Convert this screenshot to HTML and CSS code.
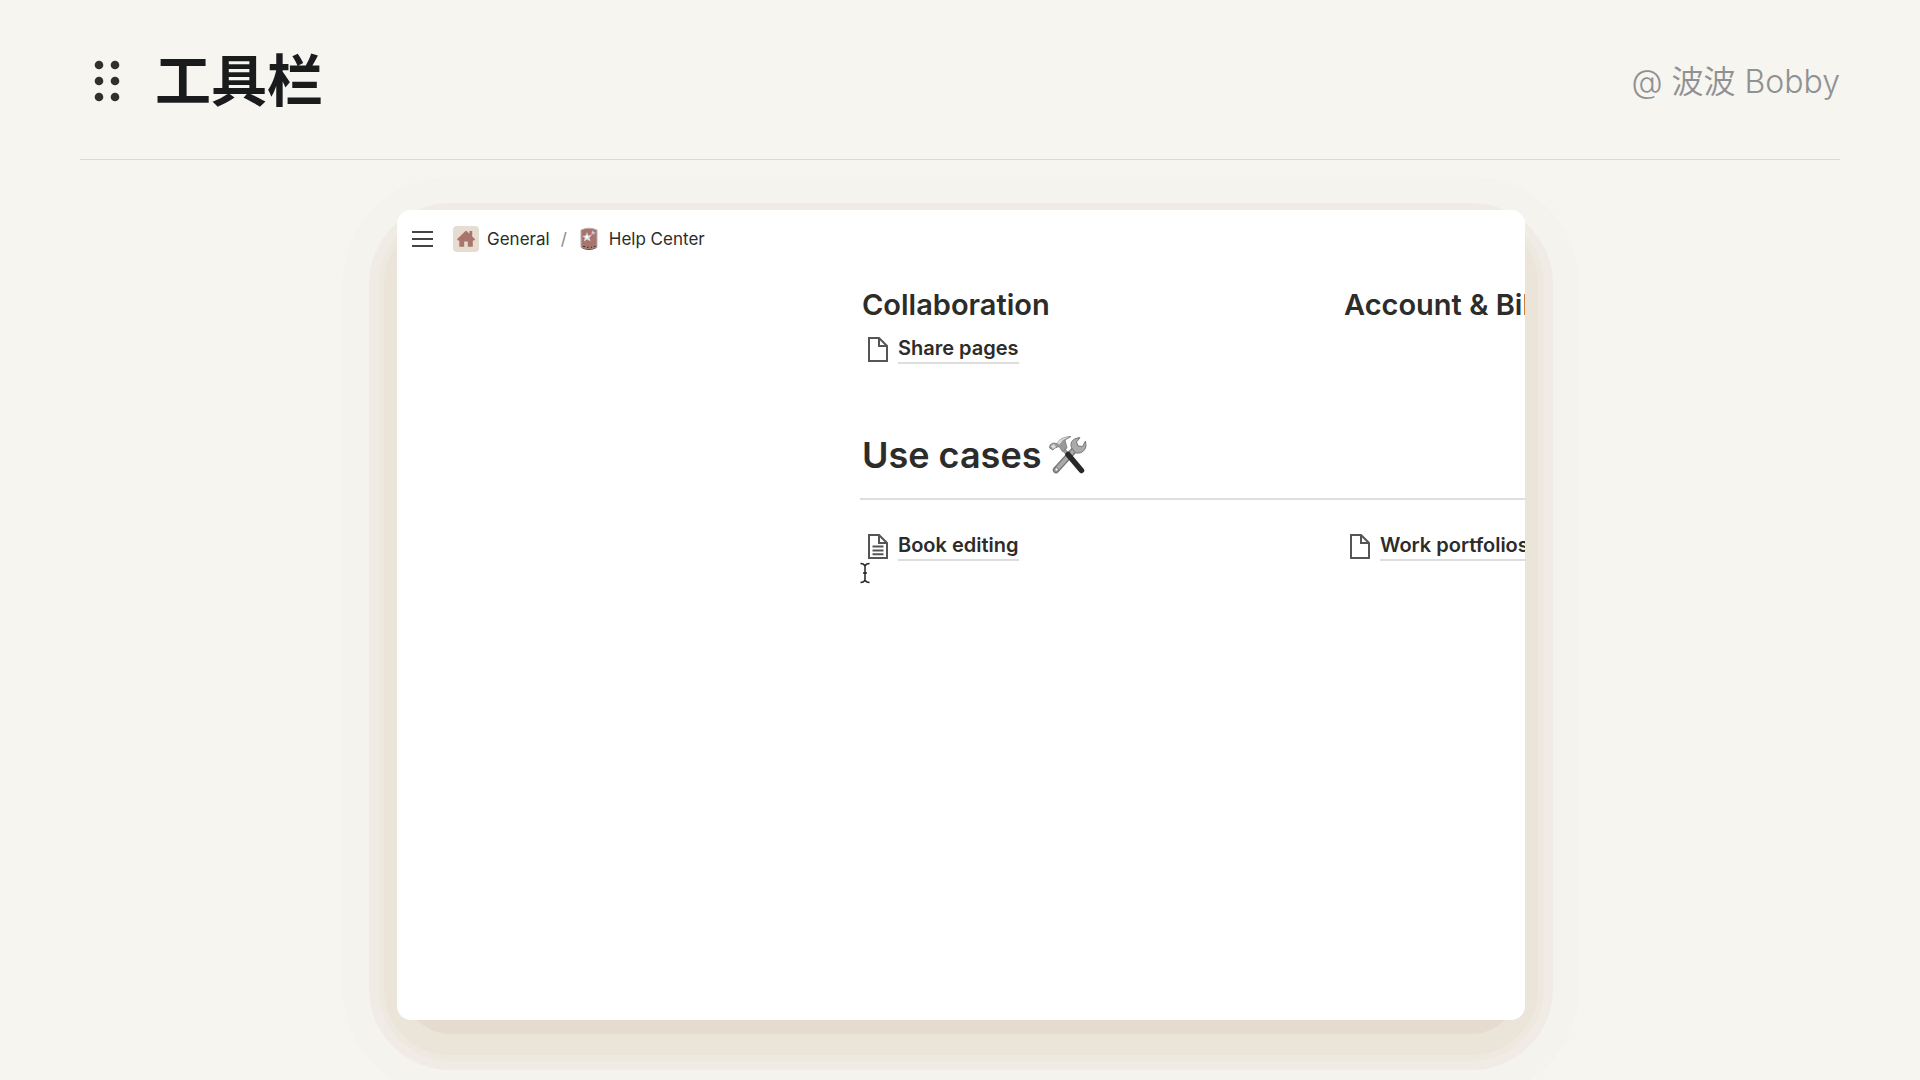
FILE: index.html
```html
<!DOCTYPE html>
<html lang="zh">
  <head>
    <meta charset="utf-8">
    <meta name="viewport" content="width=device-width, initial-scale=1">
    <title>工具栏</title>
    <link rel="stylesheet" href="styles.css">
  </head>
  <body>
    <header class="header">
      <svg class="dots" width="28" height="44" viewBox="0 0 28 44" aria-hidden="true">
        <circle cx="6" cy="6" r="4.3"/><circle cx="22" cy="6" r="4.3"/>
        <circle cx="6" cy="22" r="4.3"/><circle cx="22" cy="22" r="4.3"/>
        <circle cx="6" cy="38" r="4.3"/><circle cx="22" cy="38" r="4.3"/>
      </svg>
      <h1 class="title">工具栏</h1>
      <span class="author">@ 波波 Bobby</span>
    </header>

    <main class="main">
      <div class="frame">
        <div class="window">
          <nav class="bar">
            <button class="menu" type="button" aria-label="Menu"><span></span><span></span><span></span></button>
            <a class="crumb" href="#">
              <svg width="26" height="26" viewBox="0 0 26 26" aria-hidden="true">
                <rect width="26" height="26" rx="4" fill="#e6dcd0"/>
                <path d="M4 13.2 13 4.5l3.4 3.2V5h2.8v5.4l3 2.8-1 1.2h-1.400v6.400h-5v-5.200h-3.600v5.200H6.300v-6.400H5z" fill="#a9746c"/>
              </svg>
              General
            </a>
            <span class="slash">/</span>
            <a class="crumb" href="#">
              <svg width="18" height="24" viewBox="0 0 18 24" aria-hidden="true">
                <path d="M1 3Q9-.6 17 3v17q-8 5-16 0z" fill="#a9746c" stroke="#b9afad"/>
                <path d="M1.500 20.200q7.500 3.800 15 0v.8q-7.500 4-15 0z" fill="#55504e"/>
                <path d="M3 19.500h2M7 20.300h1.500M11 20.300h1M14 19.500h1.500" stroke="#333"/>
                <path d="m7 5 1 3.500 4-.5-2.600 2.600 1.200 3.600L7 12.400 4 14.500l.8-3.700L2.200 9l3.600-.4z" fill="#d8e1ea"/>
                <circle cx="7" cy="9.800" r="1.500" fill="#fff"/>
                <path d="m12.500 3.200 1 1.600 2 .2-1.300 1.400.2 1.700-1.600-1-1.600.6.400-1.800z" fill="#b9c9df"/>
              </svg>
              Help Center
            </a>
          </nav>

          <div class="content">
            <div class="columns">
              <section>
                <h3 class="subheading">Collaboration</h3>
                <a class="page" href="#">
                  <svg class="page-icon" viewBox="0 0 20 25" aria-hidden="true"><path d="M1 1h10l8 8v15h-18zM11 1v8h8"/></svg>
                  <span>Share pages</span>
                </a>
              </section>
              <section>
                <h3 class="subheading">Account &amp; Billing</h3>
              </section>
            </div>

            <h2 class="heading">Use cases
              <svg width="38" height="40" viewBox="0 0 38 40" aria-hidden="true">
                <path d="M7 35 27 13" stroke="#777" stroke-width="6.500" stroke-linecap="round"/>
                <path d="M7 35 27 13" stroke="#a9a9a9" stroke-width="4" stroke-linecap="round"/>
                <path d="M27 3.500c-4 1-6 5-4.500 9l3.500 5c5 2 10-1 11-6.500L36.500 6l-3 5.500-4.500-.5-1.500-4 3.500-4.300q-2-.2-4 .8z" fill="#aaa" stroke="#777"/>
                <circle cx="7.500" cy="34.500" r="1.800" fill="#eee" stroke="#777"/>
                <path d="m14 14 5.500 6" stroke="#999" stroke-width="4"/>
                <path d="m19 19.500 13.500 16" stroke="#292929" stroke-width="5.500" stroke-linecap="round"/>
                <path d="m1 10 3-2 4 .5Q11 2 22 1.500L16 5l2 8-4.500 3.500-3.500-5-4 1.500-2 2L.5 13z" fill="#999" stroke="#777" stroke-width=".8"/>
                <path d="M8 8Q12 2.500 20 2l-6 3-3.500 4.500zM1.800 11l3.200-2 2 3-3 2z" fill="#d8dde2"/>
              </svg>
            </h2>
            <hr class="rule">
            <div class="columns">
              <a class="page" href="#">
                <svg class="page-icon" viewBox="0 0 20 25" aria-hidden="true"><path d="M1 1h10l8 8v15h-18zM11 1v8h8M4.500 12.500h11M4.500 16.500h11M4.500 20.300h11"/></svg>
                <span>Book editing</span>
              </a>
              <a class="page" href="#">
                <svg class="page-icon" viewBox="0 0 20 25" aria-hidden="true"><path d="M1 1h10l8 8v15h-18zM11 1v8h8"/></svg>
                <span>Work portfolios</span>
              </a>
              <svg class="cursor" width="10" height="22" viewBox="0 0 10 22" aria-hidden="true"><path d="M.5 1.500Q4 1.500 5 4q1-2.500 4.500-2.500M5 4v14M.5 20.500Q4 20.500 5 18q1 2.500 4.500 2.500M3 11h4"/></svg>
            </div>
          </div>
        </div>
      </div>
    </main>
  </body>
</html>
```
FILE: styles.css
```css
* {box-sizing: border-box;}
body {
  margin: 0;
  min-height: 100vh;
  background: #f6f5f0;
  color: #2c2c2a;
  font-family: Inter, "Noto Sans CJK SC", sans-serif;
  display: flex;
  flex-direction: column;
}
h1, h2, h3 {margin: 0;}
a {color: inherit; text-decoration: none;}

.header {
  display: flex;
  align-items: center;
  height: 160px;
  margin: 0 80px;
  padding: 4px 0 0 13px;
  border-bottom: 1px solid #d9d9d6;
}
.dots {fill: #30302c;}
.dots {margin-bottom: 2px;}
.title {
  margin: 0 0 10px 34px;
  color: #191b1c;
  font: 700 56px/80px "Noto Sans CJK SC", sans-serif;
}
.author {
  margin-left: auto;
  color: #8f9193;
  font-size: 32px;
  font-weight: 350;
  line-height: 48px;
}

.main {
  flex: 1;
  display: flex;
  padding: 50px 395px 60px 397px;
}
.frame {
  position: relative;
  z-index: 0;
  flex: 1;
  min-width: 0;
  display: flex;
}
/* stepped shadow, shifted down behind the window */
.frame::before {
  content: "";
  position: absolute;
  z-index: -1;
  inset: 29px 8px -14px;
  border-radius: 45px;
  background: #e5dbcf;
  box-shadow: 0 0 0 21px #ebe4d9, 0 0 0 27px #ede9e1, 0 0 0 36px #f0ebe5, 0 0 0 62px #f4f3ee;
}
.window {
  flex: 1;
  min-width: 0;
  overflow: hidden;
  border-radius: 14px;
  background: #fff;
}

.bar {
  display: flex;
  align-items: center;
  height: 57px;
  padding-left: 15px;
  font-size: 17px;
}
.menu {
  display: flex;
  flex-direction: column;
  gap: 5px;
  width: 21px;
  margin-right: 20px;
  padding: 0;
  border: 0;
  background: none;
}
.menu span {height: 2px; background: #444;}
.crumb {display: flex; align-items: center; gap: 8px;}
.crumb + .slash + .crumb {gap: 11px;}
.slash {margin: 0 13px 0 11px; color: #888;}

.content {padding: 18px 0 0 463px;}
.columns {
  position: relative;
  display: grid;
  grid-template-columns: 482px 482px;
}
.subheading {
  padding-left: 2px;
  font-size: 29px;
  font-weight: 600;
  line-height: 40px;
}
.page {
  display: flex;
  align-items: center;
  gap: 10px;
  height: 30px;
  padding-left: 8px;
  font-size: 20px;
  font-weight: 600;
  line-height: 28px;
}
.subheading + .page {margin-top: 9px;}
.page span {border-bottom: 2px solid #ddd; white-space: nowrap;}
.page-icon {
  width: 20px;
  height: 25px;
  fill: none;
  stroke: #555;
  stroke-width: 2;
}
.heading {
  display: flex;
  align-items: center;
  gap: 8px;
  margin-top: 66px;
  padding-left: 2px;
  font-size: 36px;
  font-weight: 600;
  line-height: 50px;
}
.heading svg {fill: none;}
.rule {
  margin: 18px 0 31px;
  border: 0;
  border-top: 2px solid #dedede;
}
.cursor {
  position: absolute;
  top: 31px;
  left: 0;
  fill: none;
  stroke: #222;
  stroke-width: 1.5;
}
```
